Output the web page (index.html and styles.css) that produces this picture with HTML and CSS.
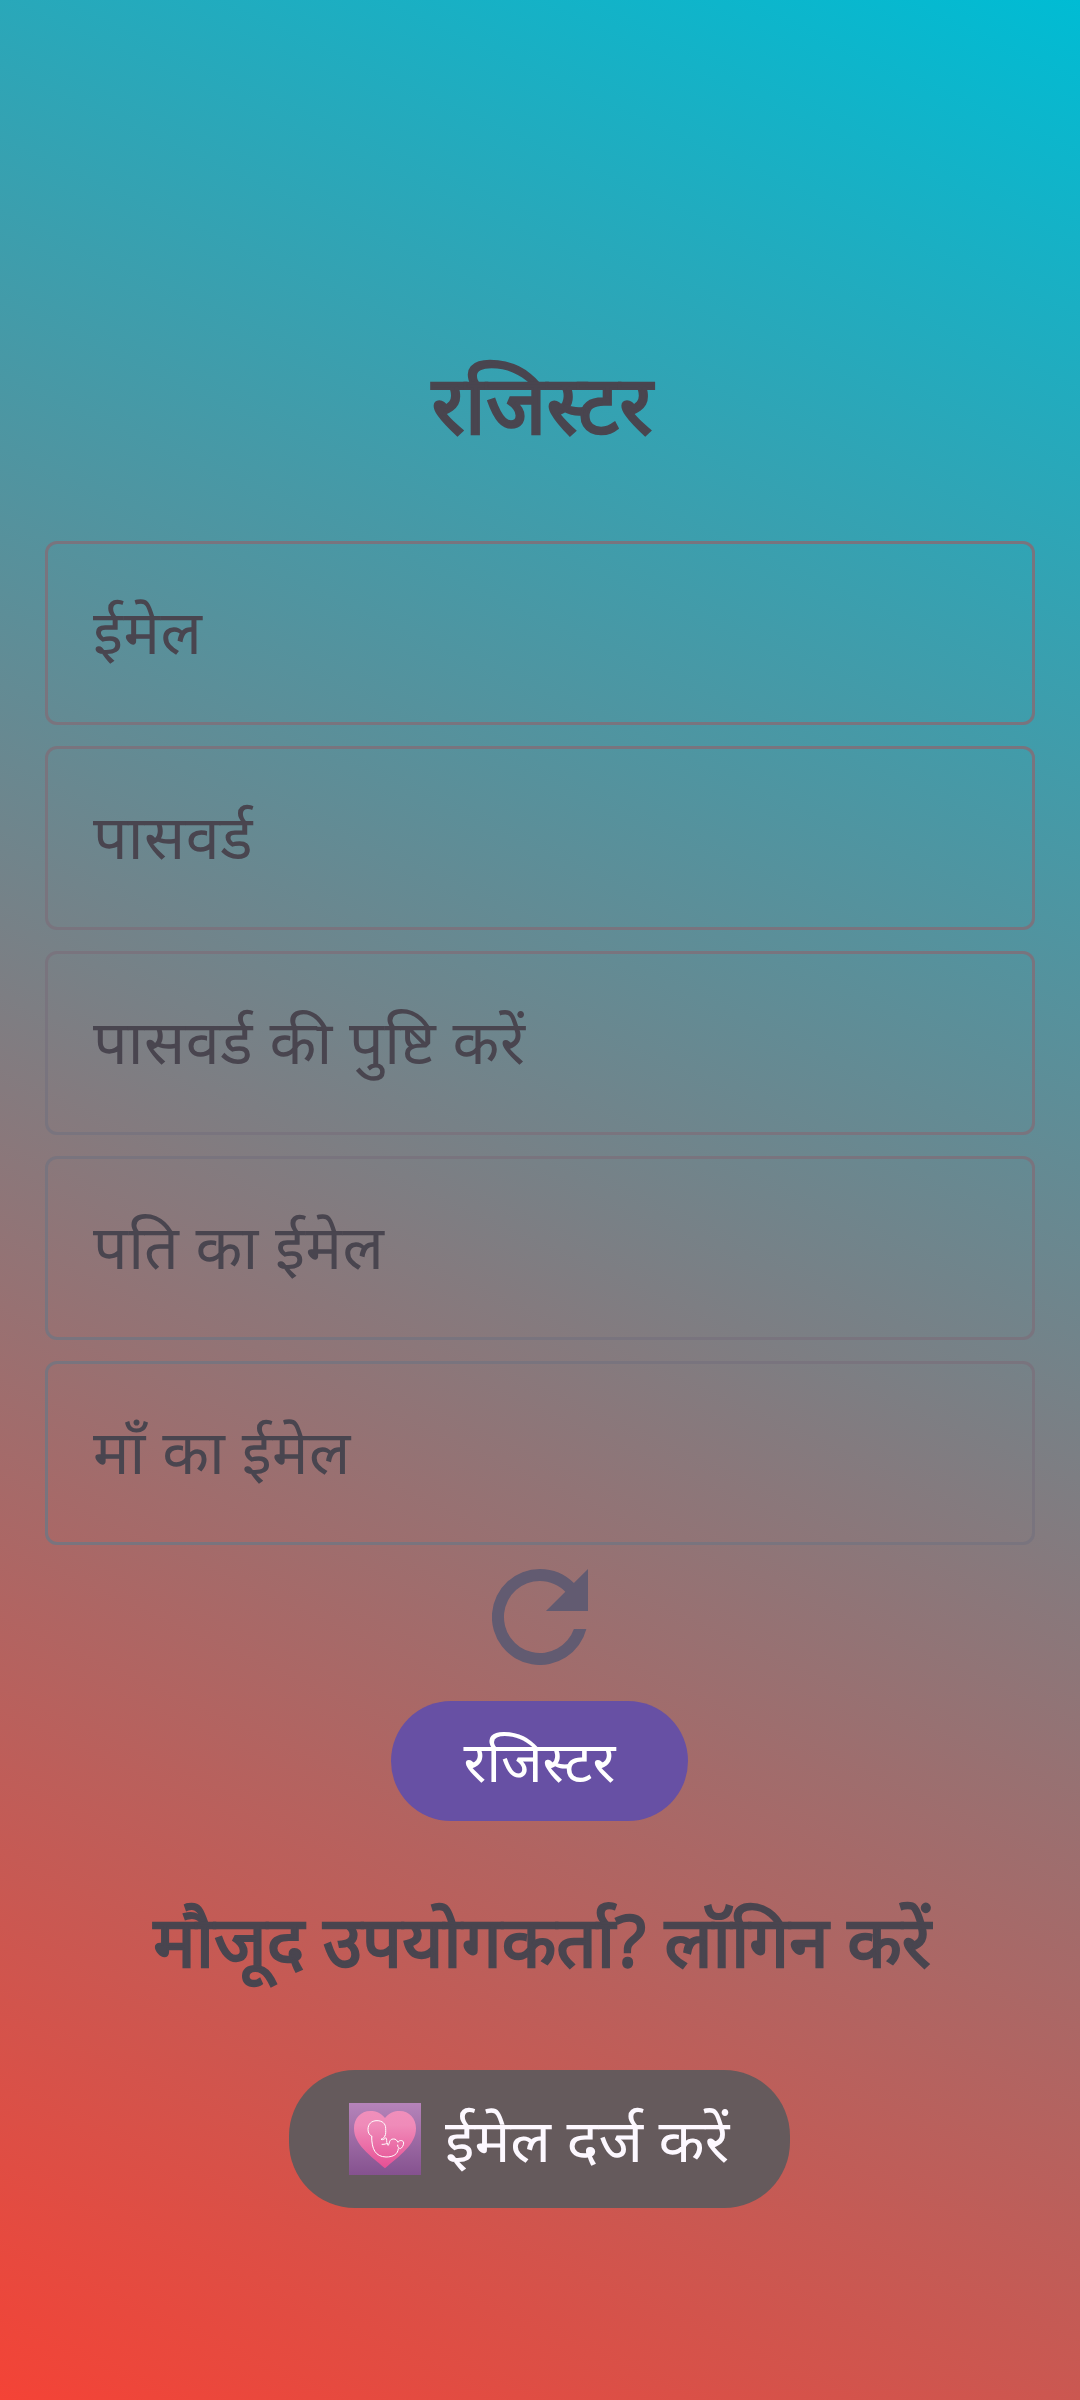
FILE: index.html
```html
<!DOCTYPE html>
<html lang="hi">
<head>
<meta charset="utf-8">
<title>रजिस्टर</title>
<link rel="stylesheet" href="styles.css">
</head>
<body>
<main class="screen">
  <h1 class="title">रजिस्टर</h1>
  <div class="fields">
    <div class="field">ईमेल</div>
    <div class="field">पासवर्ड</div>
    <div class="field">पासवर्ड की पुष्टि करें</div>
    <div class="field">पति का ईमेल</div>
    <div class="field">माँ का ईमेल</div>
  </div>
  <svg class="refresh" viewBox="4 4 16 16"><path d="M17.65 6.35A7.958 7.958 0 0 0 12 4a8 8 0 1 0 7.73 10h-2.08A6 6 0 1 1 12 6c1.66 0 3.14.69 4.22 1.78L13 11h7V4z"/></svg>
  <button class="register">रजिस्टर</button>
  <p class="login">मौजूद उपयोगकर्ता? लॉगिन करें</p>
  <div class="toast">
    <svg class="logo" viewBox="0 0 216 216">
      <defs>
        <linearGradient id="tile" x2="0" y2="1"><stop stop-color="#b584ba"/><stop offset="1" stop-color="#85528f"/></linearGradient>
        <linearGradient id="heart" x2="0" y2="1"><stop stop-color="#f08fbb"/><stop offset=".25" stop-color="#ef8bb9"/><stop offset="1" stop-color="#e64f94"/></linearGradient>
      </defs>
      <rect width="216" height="216" fill="url(#tile)"/>
      <path fill="url(#heart)" d="M108 45C96 29 80 24 64 24 35 24 15 47 15 76c0 49 49 82 93 120 44-38 93-71 93-120 0-29-20-52-49-52-16 0-32 5-44 21z"/>
      <g class="baby">
        <path d="M70 101C62 97 57 90 57 80 57 63 67 53 84 53c16 0 26 9 26 23 0 10 1 17-2 23M68 100c0 38 11 61 43 62 23 0 36-9 37-26"/>
        <path d="M107 98c1 5-4 8-11 11 6 2 10 1 14-5 6 4 0 11 6 21m-18-1c11 1 14-4 19-1m0 5c5-4 2-20 16-20 8-1 11 5 14 10 3-8 17-7 17 2 0 7-6 16-10 17-4-1-9-5-8-12"/>
      </g>
    </svg>
    <span>ईमेल दर्ज करें</span>
  </div>
</main>
</body>
</html>
```
FILE: styles.css
```css
body {
  margin: 0;
}

.screen {
  box-sizing: border-box;
  width: 1080px;
  height: 2400px;
  display: flex;
  flex-direction: column;
  align-items: center;
  padding-top: 337px;
  background: linear-gradient(24.23deg, #f44336, #00bcd4);
  color: #49454f;
  font-family: "Noto Sans", "Noto Sans Devanagari", sans-serif;
}

.title {
  margin: 0 0 72px;
  padding-left: 4px;
  font-size: 81.5px;
  font-weight: 400;
  line-height: 132px;
  -webkit-text-stroke: 2.6px currentColor;
}

.fields {
  display: grid;
  gap: 21px;
  width: 990px;
}

.field {
  box-sizing: border-box;
  height: 184px;
  padding-left: 45px;
  border: 3px solid #79747e;
  border-radius: 12px;
  font-size: 61px;
  line-height: 173px;
  letter-spacing: 0.5px;
}

.refresh {
  width: 96px;
  height: 96px;
  margin-top: 24px;
  fill: #625b71;
}

.register {
  width: 297px;
  height: 120px;
  margin: 36px 1px 0 0;
  padding: 0 0 2px;
  border: 0;
  border-radius: 60px;
  background: #6750a4;
  color: #fff;
  font-family: inherit;
  font-size: 56px;
  line-height: 118px;
}

.login {
  margin: 64px 0 0;
  padding-left: 4px;
  font-size: 71px;
  line-height: 110px;
  white-space: nowrap;
  -webkit-text-stroke: 2.3px currentColor;
}

.toast {
  box-sizing: border-box;
  display: flex;
  align-items: center;
  gap: 24px;
  width: 501px;
  height: 138px;
  margin: 75px 1px 0 0;
  padding-left: 60px;
  border-radius: 66px;
  background: #655a5c;
  color: #fdf8ff;
  font-size: 60px;
  white-space: nowrap;
}

.logo {
  width: 72px;
  height: 72px;
}

.baby {
  fill: none;
  stroke: #fff;
  stroke-width: 3;
  stroke-linejoin: round;
}
```
